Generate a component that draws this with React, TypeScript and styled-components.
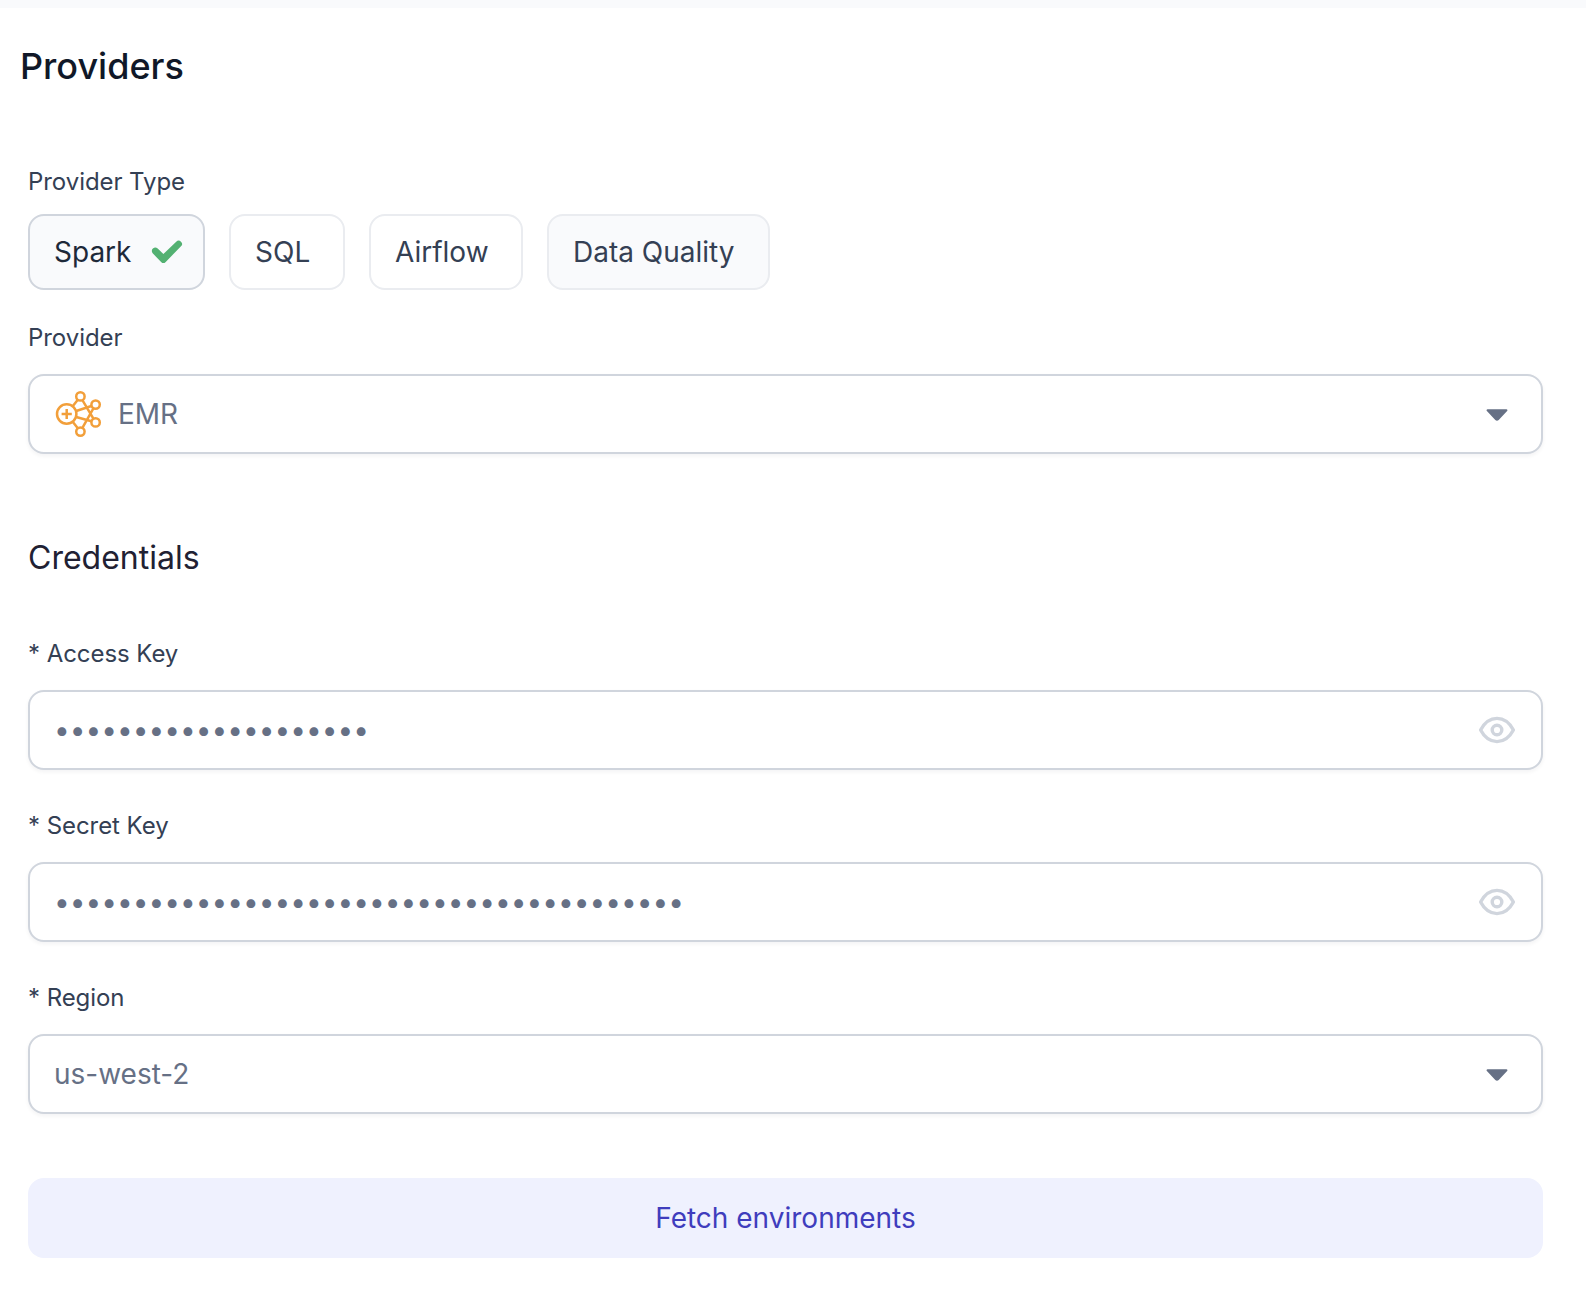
import React from "react";
import styled, { createGlobalStyle } from "styled-components";

const GlobalStyle = createGlobalStyle`
  *, *::before, *::after { box-sizing: border-box; }
  body {
    margin: 0;
    background: #ffffff;
    font-family: Inter, "Liberation Sans", sans-serif;
    -webkit-font-smoothing: antialiased;
  }
`;

const Page = styled.main`
  min-height: 1310px;
  border-top: 8px solid #f9fafc;
  padding: 34px 43px 52px 20px;
`;

const PageTitle = styled.h1`
  margin: 0;
  font-size: 36px;
  line-height: 48px;
  font-weight: 500;
  color: #101828;
`;

const Form = styled.form`
  display: flex;
  flex-direction: column;
  padding: 73px 0 0 8px;
`;

const Field = styled.div<{ $top?: number; $gap?: number }>`
  display: flex;
  flex-direction: column;
  gap: ${(p) => p.$gap ?? 17}px;
  margin-top: ${(p) => p.$top ?? 0}px;
`;

const Label = styled.label`
  font-size: 24px;
  line-height: 38px;
  letter-spacing: -0.06px;
  color: #344054;
`;

const SectionTitle = styled.h2`
  margin: 80px 0 0;
  font-size: 32px;
  line-height: 48px;
  font-weight: 400;
  color: #212133;
`;

const ChipRow = styled.div`
  display: flex;
  gap: 24px;
`;

const Chip = styled.button<{ $width: number; $selected?: boolean; $filled?: boolean }>`
  display: flex;
  align-items: center;
  gap: 20px;
  width: ${(p) => p.$width}px;
  height: 76px;
  padding: 0 0 0 24px;
  border: 2px solid ${(p) => (p.$selected ? "#d0d5dd" : "#eaecf0")};
  border-radius: 16px;
  background: ${(p) => (p.$selected || p.$filled ? "#f9fafc" : "#ffffff")};
  font: inherit;
  font-size: 28px;
  white-space: nowrap;
  color: ${(p) => (p.$selected ? "#1d2939" : "#344054")};
`;

const Control = styled.div`
  display: flex;
  align-items: center;
  height: 80px;
  padding: 0 23px 0 24px;
  border: 2px solid #d0d5dd;
  border-radius: 16px;
  background: #ffffff;
  box-shadow: 0 2px 4px rgba(16, 24, 40, 0.05);
  font-size: 28px;
  color: #667085;
`;

const Value = styled.span`
  flex: 1;
`;

const SecretInput = styled.input`
  flex: 1;
  min-width: 0;
  padding: 0;
  border: 0;
  outline: 0;
  background: transparent;
  font: inherit;
  color: inherit;
`;

const FetchButton = styled.button`
  height: 80px;
  margin-top: 64px;
  border: 0;
  border-radius: 16px;
  background: #eff1fe;
  font: inherit;
  font-size: 28px;
  color: #3f3dbd;
`;

const Icon = styled.svg`
  display: block;
  flex: none;
`;

const ProviderIcon = styled(Icon)`
  margin-right: 16px;
`;

const CheckIcon = () => (
  <Icon width="32" height="24" viewBox="0 0 32 24" fill="#53b172">
    <path d="M1.9 8.6a3.4 3.4 0 0 1 4.8 0L12.4 14 25.2 1.7a3.5 3.5 0 0 1 4.8 0 3.2 3.2 0 0 1 0 4.6L14.7 21.9a3.2 3.2 0 0 1-4.6 0L1.9 13.5a3.3 3.3 0 0 1 0-4.9Z" />
  </Icon>
);

const EmrIcon = () => (
  <ProviderIcon width="48" height="48" viewBox="0 0 48 48" fill="none" stroke="#f29f3a" strokeWidth="2.5">
    <circle cx="12.7" cy="24" r="9.7" />
    <path d="M7.6 24h10.2M12.7 18.9v10.2" />
    <circle cx="26.4" cy="6.4" r="4.2" />
    <circle cx="41.6" cy="14.6" r="4.2" />
    <circle cx="41.6" cy="32.4" r="4.2" />
    <circle cx="26.4" cy="41.6" r="4.2" />
    <path d="M18.7 16.3 23.8 9.8M18.7 31.7l5.1 6.5M22.2 21l15.2-5M22.2 27l15.2 4.2M28.4 10.2l11 18.4M28.4 37.8l11-19.4" />
  </ProviderIcon>
);

const CaretIcon = () => (
  <Icon width="42" height="42" viewBox="0 0 42 42" fill="#667085">
    <path d="M11.6 16.2h18.8c1.1 0 1.4 1.1.7 1.9l-8.4 9c-.9 1-2.5 1-3.4 0l-8.4-9c-.7-.8-.4-1.9.7-1.9Z" />
  </Icon>
);

const EyeIcon = () => (
  <Icon width="42" height="42" viewBox="0 0 42 42" fill="none" stroke="#d0d5dd" strokeWidth="3.4" strokeLinejoin="round">
    <path d="M4.6 21C8 14.6 14 9.4 21 9.4S34 14.6 37.4 21C34 27.4 28 32.6 21 32.6S8 27.4 4.6 21Z" />
    <circle cx="21" cy="21" r="4.8" />
  </Icon>
);

const types = [
  { name: "Spark", width: 177, selected: true },
  { name: "SQL", width: 116 },
  { name: "Airflow", width: 154 },
  { name: "Data Quality", width: 223, filled: true },
];

const secrets = [
  { label: "* Access Key", length: 20, top: 53 },
  { label: "* Secret Key", length: 40, top: 37 },
];

export default function App() {
  return (
    <>
      <GlobalStyle />
      <Page>
        <PageTitle>Providers</PageTitle>
        <Form>
          <Field $gap={13}>
            <Label>Provider Type</Label>
            <ChipRow>
              {types.map((t) => (
                <Chip key={t.name} type="button" $width={t.width} $selected={t.selected} $filled={t.filled}>
                  {t.name}
                  {t.selected && <CheckIcon />}
                </Chip>
              ))}
            </ChipRow>
          </Field>
          <Field $top={29}>
            <Label>Provider</Label>
            <Control>
              <EmrIcon />
              <Value>EMR</Value>
              <CaretIcon />
            </Control>
          </Field>
          <SectionTitle>Credentials</SectionTitle>
          {secrets.map((s) => (
            <Field key={s.label} $top={s.top}>
              <Label>{s.label}</Label>
              <Control>
                <SecretInput type="password" defaultValue={"x".repeat(s.length)} />
                <EyeIcon />
              </Control>
            </Field>
          ))}
          <Field $top={37}>
            <Label>* Region</Label>
            <Control>
              <Value>us-west-2</Value>
              <CaretIcon />
            </Control>
          </Field>
          <FetchButton type="button">Fetch environments</FetchButton>
        </Form>
      </Page>
    </>
  );
}
